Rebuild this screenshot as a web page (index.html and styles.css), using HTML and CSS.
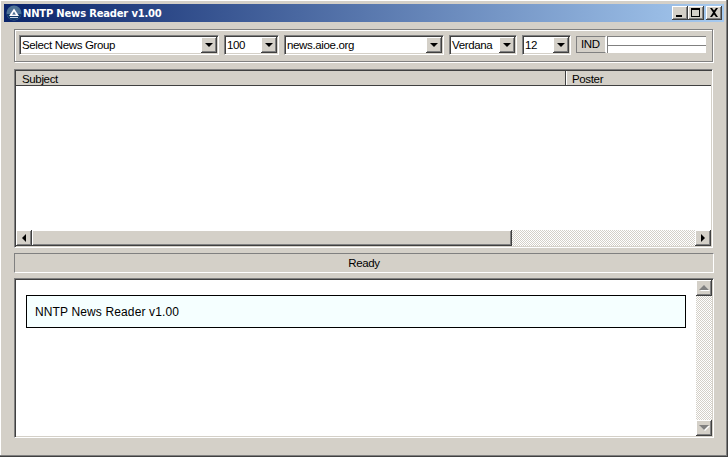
FILE: index.html
```html
<!DOCTYPE html>
<html lang="en">
<head>
<meta charset="utf-8">
<title>NNTP News Reader v1.00</title>
<link rel="stylesheet" href="styles.css">
</head>
<body>
<div class="window">
  <header class="titlebar">
    <svg class="app-icon" width="16" height="16" viewBox="0 0 16 16">
      <circle cx="8" cy="8" r="7.5" fill="#4f7396"/>
      <path d="M.6 9a7.500 7.500 0 0 0 14.800 0z" fill="#123a6a"/>
      <path d="M8 3.500 13 11H3zM8 6.500 6.200 9.500h3.600z" fill="#fff" fill-rule="evenodd"/>
      <path d="M4 12h8v1H4z" fill="#c8d6e4"/>
    </svg>
    <span class="title-text">NNTP News Reader v1.00</span>
    <div class="caption-buttons">
      <button class="cap-btn"><svg width="10" height="9" viewBox="0 0 10 9"><path d="M1 7h6v2H1z" fill="#000"/></svg></button>
      <button class="cap-btn"><svg width="10" height="9" viewBox="0 0 10 9"><path d="M0 0h9v9H0zM1 2v6h7V2z" fill="#000" fill-rule="evenodd"/></svg></button>
      <button class="cap-btn cap-close"><svg width="10" height="9" viewBox="0 0 10 9"><path d="M1 0h2l2 2.500L7 0h2L6 4.500 9 9H7L5 6.500 3 9H1l3-4.500z" fill="#000"/></svg></button>
    </div>
  </header>

  <section class="toolbar">
    <div class="combo w-group"><span class="combo-text">Select News Group</span><span class="combo-btn"><i class="arrow-down"></i></span></div>
    <div class="combo w-count"><span class="combo-text">100</span><span class="combo-btn"><i class="arrow-down"></i></span></div>
    <div class="combo w-server"><span class="combo-text">news.aioe.org</span><span class="combo-btn"><i class="arrow-down"></i></span></div>
    <div class="combo w-font"><span class="combo-text">Verdana</span><span class="combo-btn"><i class="arrow-down"></i></span></div>
    <div class="combo w-size"><span class="combo-text">12</span><span class="combo-btn"><i class="arrow-down"></i></span></div>
    <div class="indicator">
      <span class="ind-label">IND</span>
      <div class="ind-bar"><div class="ind-row"></div><div class="ind-row"></div></div>
    </div>
  </section>

  <section class="list">
    <div class="list-head">
      <div class="col col-subject">Subject</div>
      <div class="col col-poster">Poster</div>
    </div>
    <div class="list-body"></div>
    <div class="hscroll">
      <span class="sb-btn"><i class="arrow-left"></i></span>
      <span class="sb-thumb"></span>
      <span class="sb-track"></span>
      <span class="sb-btn"><i class="arrow-right"></i></span>
    </div>
  </section>

  <div class="status">Ready</div>

  <section class="reader">
    <div class="reader-content">
      <div class="banner">NNTP News Reader v1.00</div>
    </div>
    <div class="vscroll">
      <span class="sb-btn"><i class="arrow-up"></i></span>
      <span class="sb-track"></span>
      <span class="sb-btn"><i class="arrow-down-off"></i></span>
    </div>
  </section>
</div>
</body>
</html>
```

FILE: styles.css
```css
* { box-sizing: border-box; }
html, body { margin: 0; padding: 0; }
body { font: 11.5px "Liberation Sans", Arial, sans-serif; letter-spacing: -.35px; color: #000; background: #d4d0c8; }

.window {
  width: 728px;
  height: 457px;
  display: flex;
  flex-direction: column;
  padding: 3px 1px 1px 3px;
  background: #d4d0c8;
  border-right: 1px solid #404040;
  border-bottom: 1px solid #404040;
  box-shadow: inset -1px -1px 0 #808080, inset 1px 1px 0 #fff;
  overflow: hidden;
}

.titlebar {
  flex: none;
  margin: 1px 2px 0 1px;
  width: 720px;
  height: 18px;
  display: flex;
  align-items: center;
  padding: 0 2px;
  background: linear-gradient(90deg, #0a246a, #a6caf0);
}
.app-icon { flex: none; }
.title-text {
  margin-left: 1px;
  font: bold 10px "DejaVu Sans", Verdana, sans-serif;
  letter-spacing: -.2px;
  color: #fff;
  white-space: nowrap;
}
.caption-buttons { margin-left: auto; display: flex; }
.cap-btn {
  width: 16px;
  height: 14px;
  padding: 0;
  display: flex;
  align-items: center;
  justify-content: center;
  background: #d4d0c8;
  border: 0;
  border-right: 1px solid #404040;
  border-bottom: 1px solid #404040;
  box-shadow: inset 1px 1px 0 #fff, inset -1px -1px 0 #808080;
}
.cap-close { margin-left: 2px; }

.toolbar {
  flex: none;
  margin: 7px 0 0 11px;
  width: 699px;
  height: 33px;
  display: flex;
  align-items: flex-start;
  gap: 5px;
  padding: 5px 0 0 4px;
  border: 1px solid #808080;
  box-shadow: inset 1px 1px 0 #fff, 1px 1px 0 #fff;
}
.combo {
  flex: none;
  height: 20px;
  display: flex;
  align-items: center;
  padding: 1px;
  background: #fff;
  border: 1px solid;
  border-color: #808080 #fff #fff #808080;
  box-shadow: inset 1px 1px 0 #404040, inset -1px -1px 0 #d4d0c8;
}
.w-group { width: 200px; }
.w-count { width: 55px; }
.w-server { width: 160px; }
.w-font { width: 68px; }
.w-size { width: 49px; }
.combo-text { flex: 1; padding: 0 0 1px 1px; white-space: nowrap; overflow: hidden; }
.combo-btn {
  flex: none;
  width: 16px;
  height: 16px;
  display: flex;
  align-items: center;
  justify-content: center;
  background: #d4d0c8;
  border-right: 1px solid #404040;
  border-bottom: 1px solid #404040;
  box-shadow: inset 1px 1px 0 #fff, inset -1px -1px 0 #808080;
}
.arrow-down { width: 0; height: 0; border: 4px solid transparent; border-top-color: #000; border-bottom: 0; }
.arrow-left { width: 0; height: 0; border: 4px solid transparent; border-right-color: #000; border-left: 0; }
.arrow-right { width: 0; height: 0; border: 4px solid transparent; border-left-color: #000; border-right: 0; }
.arrow-up { width: 0; height: 0; border: 5px solid transparent; border-bottom-color: #808080; border-top: 0; filter: drop-shadow(1px 1px 0 #fff); }
.arrow-down-off { width: 0; height: 0; border: 5px solid transparent; border-top-color: #808080; border-bottom: 0; filter: drop-shadow(1px 1px 0 #fff); }

.indicator { flex: none; display: flex; height: 17px; margin-top: 1px; }
.ind-label {
  width: 30px;
  padding-left: 4px;
  line-height: 15px;
  border: 1px solid #808080;
  border-right-color: #fff;
}
.ind-bar {
  width: 100px;
  display: flex;
  flex-direction: column;
  padding-left: 1px;
  background: #fff;
}
.ind-row { height: 9px; border-top: 1px solid #808080; border-left: 1px solid #808080; }
.ind-row + .ind-row { height: 8px; }

.list {
  flex: none;
  margin: 7px 0 0 11px;
  width: 699px;
  height: 179px;
  display: flex;
  flex-direction: column;
  padding: 1px;
  border: 1px solid;
  border-color: #808080 #fff #fff #808080;
  box-shadow: inset 1px 1px 0 #404040, inset -1px -1px 0 #d4d0c8;
}
.list-head { flex: none; height: 15px; display: flex; background: #d4d0c8; border-bottom: 1px solid #404040; }
.col { line-height: 16px; padding-left: 6px; white-space: nowrap; }
.col-subject { width: 550px; border-right: 1px solid #404040; }
.col-poster { flex: 1; padding-left: 5px; border-left: 1px solid #fff; }
.list-body { flex: 1; background: #fff; }

.hscroll { flex: none; height: 16px; display: flex; }
.sb-btn {
  flex: none;
  width: 16px;
  height: 16px;
  display: flex;
  align-items: center;
  justify-content: center;
  background: #d4d0c8;
  border-right: 1px solid #404040;
  border-bottom: 1px solid #404040;
  box-shadow: inset 1px 1px 0 #fff, inset -1px -1px 0 #808080;
}
.sb-thumb {
  flex: none;
  width: 480px;
  background: #d4d0c8;
  border-right: 1px solid #404040;
  border-bottom: 1px solid #404040;
  box-shadow: inset 1px 1px 0 #fff, inset -1px -1px 0 #808080;
}
.sb-track {
  flex: 1;
  background-image: conic-gradient(#fff 25%, #d4d0c8 0 50%, #fff 0 75%, #d4d0c8 0);
  background-size: 2px 2px;
}

.status {
  flex: none;
  margin: 5px 0 0 11px;
  width: 700px;
  height: 20px;
  line-height: 19px;
  text-align: center;
  border: 1px solid;
  border-color: #808080 #fff #fff #808080;
}

.reader {
  flex: none;
  margin: 5px 0 0 11px;
  width: 700px;
  height: 160px;
  display: flex;
  padding: 1px;
  border: 1px solid;
  border-color: #808080 #fff #fff #808080;
  box-shadow: inset 1px 1px 0 #404040, inset -1px -1px 0 #d4d0c8;
}
.reader-content { flex: 1; min-width: 0; background: #fff; padding: 15px 10px 0; }
.banner {
  height: 33px;
  padding-left: 8px;
  line-height: 32px;
  font-size: 12px;
  letter-spacing: .13px;
  background: #f5ffff;
  border: 1px solid #000;
  white-space: nowrap;
}
.vscroll { flex: none; width: 16px; display: flex; flex-direction: column; }
```
